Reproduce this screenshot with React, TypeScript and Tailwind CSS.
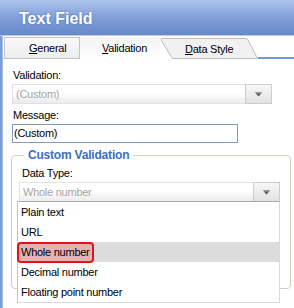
import React from "react";

const Arrow = () => (
  <svg width="7" height="5" viewBox="0 0 7 5">
    <rect x="0" y="0" width="7" height="1" fill="#9a9a9a" />
    <polygon points="0.5,1.2 6.5,1.2 3.5,4.5" fill="#5a5a5a" />
  </svg>
);

function Combo({ text, className }: { text: string; className: string }) {
  return (
    <div className={`flex h-[20px] border border-[#e2e2e2] ${className}`}>
      <div className="flex-1 flex items-center pl-[3px] leading-[13px] text-[#a6a6a6] bg-gradient-to-b from-white from-45% to-[#ebebeb]">
        {text}
      </div>
      <div className="w-[27px] flex items-center justify-center border border-[#cdcdcd] -my-px -mr-px bg-gradient-to-b from-[#f7f7f7] to-[#e2e2e2]">
        <Arrow />
      </div>
    </div>
  );
}

const items = ["Plain text", "URL", "Whole number", "Decimal number", "Floating point number"];

export default function App() {
  return (
    <div className="w-[294px] h-[308px] overflow-hidden bg-white flex flex-col font-['Liberation_Sans',Arial,sans-serif] text-[11px] leading-[13px] tracking-[-0.25px] text-black">
      <div className="h-[36px] shrink-0 bg-gradient-to-b from-[#adc3e9] via-[#819fd9] to-[#6788ca] border-b border-[#b9cbed] pl-[19px] pt-[10px] text-[16px] leading-[18px] font-bold tracking-normal text-white [text-shadow:0_0_2px_#3f63b0]">
        Text Field
      </div>
      <div className="flex flex-1">
        <div className="w-[3px] shrink-0 bg-[#7c9cd9] border-r border-[#a9bfe9]" />
        <div className="flex-1 flex flex-col">
          {/* tabs */}
          <div className="flex items-end h-[23px] pt-[1px]">
            <div className="w-[1px] h-[22px] border-b border-[#c4c4c4]" />
            <div className="w-[76px] h-[22px] border border-[#c4c4c4] bg-gradient-to-b from-[#fafafa] to-[#ececec] pl-[24px] pt-[4px]">
              <u>G</u>eneral
            </div>
            <div className="w-[80px] h-[22px] bg-gradient-to-b from-[#f4f4f4] to-white pl-[22px] pt-[5px]">
              <u>V</u>alidation
            </div>
            <div className="relative w-[98px] h-[22px] pl-[25px] pt-[6px]">
              <svg className="absolute inset-0" width="98" height="22" viewBox="0 0 98 22">
                <path d="M12.5,21.5 L1,3 Q0.5,1.5 3,1.5 L85,1.5 Q87,1.5 88,3 L97.5,21.5 Z" fill="#f1f1f1" stroke="#bdbdbd" strokeWidth="1" />
              </svg>
              <span className="relative">
                <u>D</u>ata Style
              </span>
            </div>
            <div className="flex-1 h-[22px] border-b-2 border-[#7598d4]" />
          </div>

          {/* content */}
          <div className="flex flex-col pt-[10px]">
            <div className="pl-[10px] h-[13px]">Validation:</div>
            <Combo text="(Custom)" className="mt-[2px] ml-[9px] w-[260px]" />
            <div className="pl-[10px] h-[13px] mt-[5px]">Message:</div>
            <div className="mt-[2px] ml-[9px] w-[226px] h-[19px] border border-[#7f9db9] flex items-center pl-[1px]">
              (Custom)
            </div>

            <fieldset className="mt-[5px] ml-[8px] w-[278px] h-[141px] border border-[#d0d0bf] rounded-[4px] px-[10px] pt-[5px]">
              <legend className="ml-[2px] px-[4px] text-[12px] leading-[14px] font-bold tracking-[-0.2px] text-[#3d6fbf]">
                Custom Validation
              </legend>
              <div className="h-[13px]">Data Type:</div>
              <div className="relative mt-[2px] -ml-[3px] w-[261px]">
                <Combo text="Whole number" className="w-[261px]" />
                <div className="absolute left-[-2px] top-[19px] w-[263px] bg-white border border-[#dadada] border-t-[#a9a9a9] border-l-[#c2c2c2] flex flex-col">
                  {items.map((it) =>
                    it === "Whole number" ? (
                      <div key={it} className="h-[20px] flex items-center pl-[3px] bg-[#dcdcdc]">
                        <span className="-ml-[4px] h-[21px] flex items-center pl-[2px] pr-[2px] border-2 border-[#e5121c] rounded-[4px] bg-[#e3b3b3]">
                          {it}
                        </span>
                      </div>
                    ) : (
                      <div key={it} className="h-[20px] flex items-center pl-[3px]">
                        {it}
                      </div>
                    )
                  )}
                </div>
              </div>
            </fieldset>
          </div>
        </div>
      </div>
    </div>
  );
}
